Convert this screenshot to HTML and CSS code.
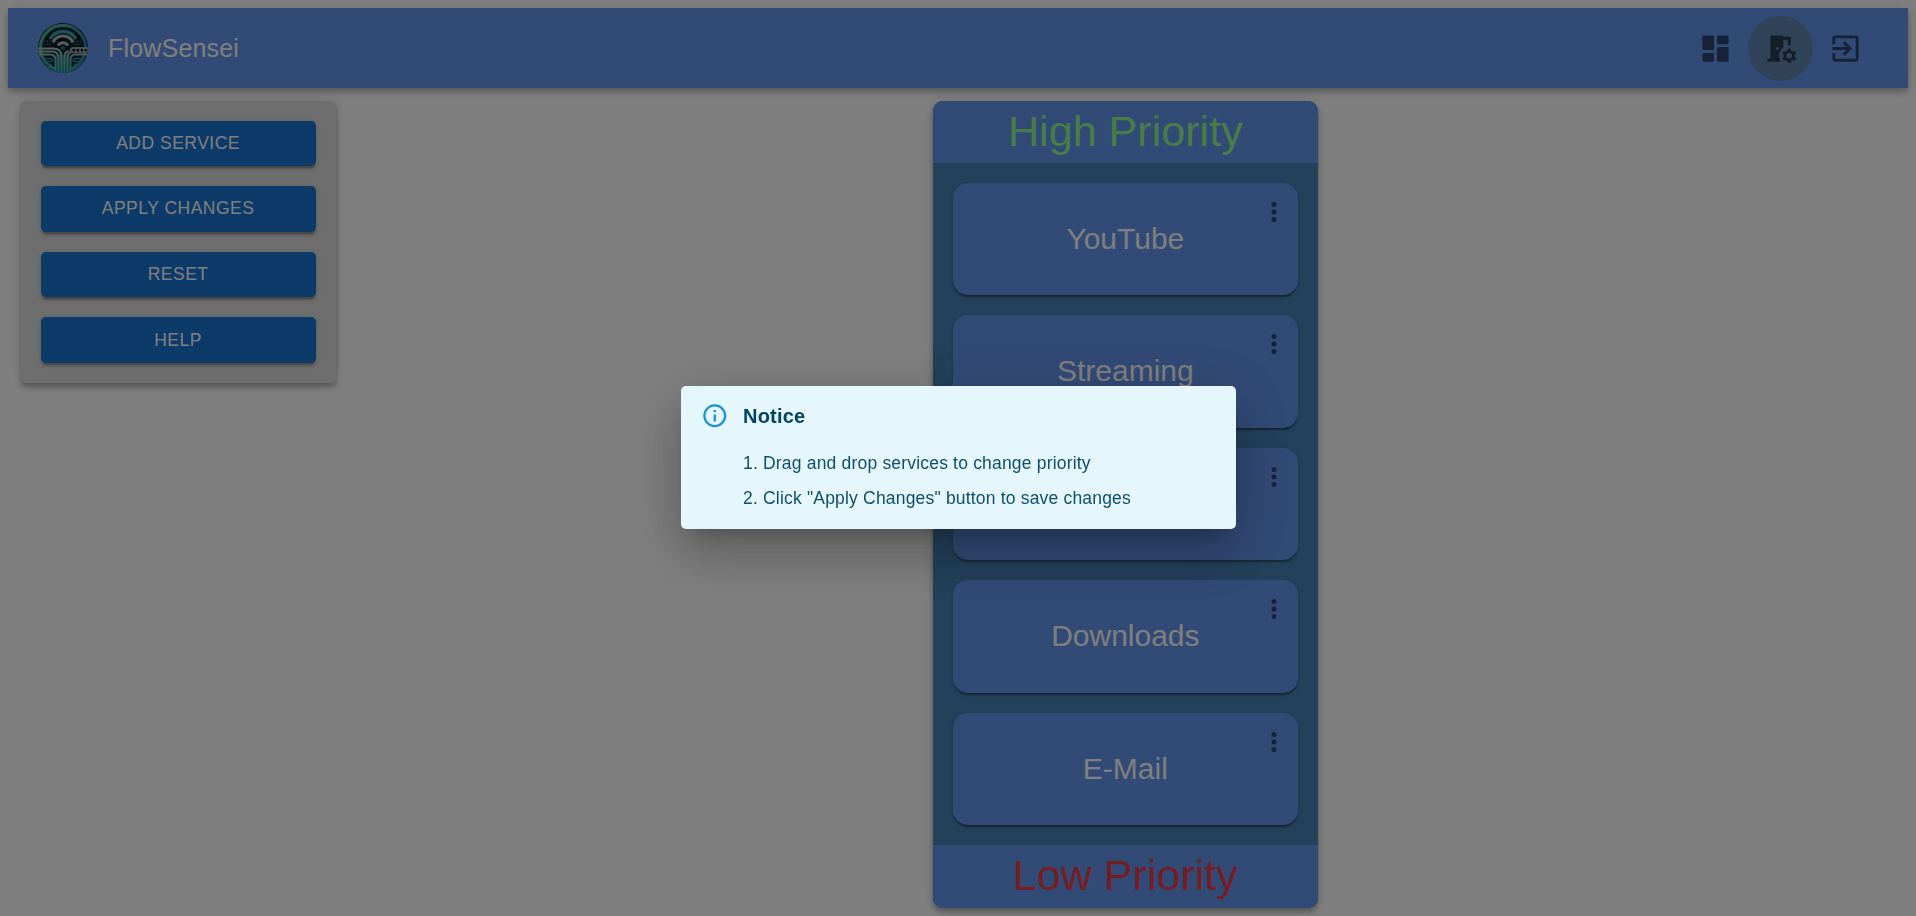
FILE: index.html
```html
<!DOCTYPE html>
<html lang="en">
<head>
<meta charset="utf-8">
<title>FlowSensei</title>
<link rel="stylesheet" href="styles.css">
</head>
<body>
<header class="app-bar">
  <svg class="logo" viewBox="0 0 50 50">
    <defs>
      <clipPath id="disc"><circle cx="25" cy="25" r="25"/></clipPath>
      <linearGradient id="rim" gradientUnits="userSpaceOnUse" x1="2" x2="48" y1="0" y2="0"><stop offset="0" stop-color="#48b880"/><stop offset=".5" stop-color="#58a8a4"/><stop offset="1" stop-color="#2b859c"/></linearGradient>
      <linearGradient id="flow" gradientUnits="userSpaceOnUse" x1="0" x2="0" y1="24" y2="50"><stop offset="0" stop-color="#b4c4c2"/><stop offset=".4" stop-color="#7cbcb4"/><stop offset="1" stop-color="#2cb0ac"/></linearGradient>
    </defs>
    <g clip-path="url(#disc)" fill="none">
      <rect width="50" height="50" fill="#071a2b"/>
      <circle cx="25" cy="25" r="22.600" stroke="url(#rim)" stroke-width="3.200"/>
      <path d="M12 16a15 15 0 0 1 26 0" stroke="#3c9cab" stroke-width="3.400"/>
      <path d="M15 19.500a11 11 0 0 1 20 0M20 22.500a5.800 5.800 0 0 1 10 0" stroke="#b8b8b6" stroke-width="3"/>
      <path d="M6 18.500h7M6 21.500h8M37 18.500h7M36 21.500h8" stroke="#3e7680" stroke-width="1.400" stroke-dasharray="1.400 1.200"/>
      <path d="M17.500 32h14v18h-14z" fill="#1f6c74"/>
      <path d="M0 25.500h15q8.500 0 8.500 8v17M0 28.500h14q6.500 0 6.500 6.500v15M0 31.500h12q5.500 0 5.500 5.500v13M50 31.500H37q-4.500 0-4.500 5.500v13M26.500 50V34q0-5 4-6M29.500 50V35q0-5 4-6" stroke="url(#flow)" stroke-width="2"/>
      <path d="M32 25.500q1-1.500 3-1.500h15v6H31z" fill="#98a1a7"/>
      <path d="M34.500 27.200h14" stroke="#071a2b" stroke-width="2.600" stroke-dasharray="2.500 1.600"/>
      <path d="M4 35.500h8q3 0 3 3M6 38.500h8M8 41.500h6M46 35.500h-8q-3 0-3 3M44 38.500h-8M43 41.500h-7" stroke="#2e90a2" stroke-width="1.500"/>
      <path d="M5 38q4 7 11 10M45 38q-4 7-11 10" stroke="#28808f" stroke-width="2"/>
      <circle cx="25" cy="25" r="2.600" fill="#247b78" stroke="#071a2b"/>
    </g>
  </svg>
  <span class="brand">FlowSensei</span>
  <nav class="nav">
    <button class="icon-button" aria-label="Dashboard"><svg viewBox="0 0 24 24"><path d="M4 13h6c.55 0 1-.45 1-1V4c0-.55-.45-1-1-1H4c-.55 0-1 .45-1 1v8c0 .55.45 1 1 1zm0 8h6c.55 0 1-.45 1-1v-4c0-.55-.45-1-1-1H4c-.55 0-1 .45-1 1v4c0 .55.45 1 1 1zm10 0h6c.55 0 1-.45 1-1v-8c0-.55-.45-1-1-1h-6c-.55 0-1 .45-1 1v8c0 .55.45 1 1 1zM13 4v4c0 .55.45 1 1 1h6c.55 0 1-.45 1-1V4c0-.55-.45-1-1-1h-6c-.55 0-1 .45-1 1z"/></svg></button>
    <button class="icon-button active" aria-label="Preferences"><svg viewBox="0 0 24 24"><path d="M14 11.260V6h3v4h2V4h-5V3H5v16H3v2h9.260c-.79-1.130-1.260-2.510-1.260-4 0-2.380 1.190-4.470 3-5.740zM10 11c.55 0 1 .45 1 1s-.45 1-1 1-1-.45-1-1 .45-1 1-1z"/><path d="M21.690 16.370l1.140-1-1-1.730-1.450.49c-.32-.27-.68-.48-1.080-.63L19 12h-2l-.3 1.490c-.4.15-.76.36-1.080.63l-1.450-.49-1 1.730 1.140 1c-.08.5-.08.76 0 1.260l-1.140 1 1 1.730 1.450-.49c.32.27.68.48 1.080.63L17 22h2l.3-1.490c.4-.15.76-.36 1.080-.63l1.450.49 1-1.730-1.140-1c.08-.51.08-.77 0-1.270zM18 19c-1.100 0-2-.9-2-2s.9-2 2-2 2 .9 2 2-.9 2-2 2z"/></svg></button>
    <button class="icon-button" aria-label="Log out"><svg viewBox="0 0 24 24"><path d="M10.090 15.590L11.500 17l5-5-5-5-1.410 1.410L12.670 11H3v2h9.670l-2.580 2.590zM19 3H5c-1.110 0-2 .9-2 2v4h2V5h14v14H5v-4H3v4c0 1.100.89 2 2 2h14c1.100 0 2-.9 2-2V5c0-1.100-.9-2-2-2z"/></svg></button>
  </nav>
</header>
<main class="content">
  <aside class="actions">
    <button class="action">ADD SERVICE</button>
    <button class="action">APPLY CHANGES</button>
    <button class="action">RESET</button>
    <button class="action">HELP</button>
  </aside>
  <div class="stage">
    <section class="board">
      <h1 class="board-title high">High Priority</h1>
      <div class="cards">
        <div class="card">YouTube<svg class="more" viewBox="0 0 24 24"><circle cx="12" cy="6" r="2"/><circle cx="12" cy="12" r="2"/><circle cx="12" cy="18" r="2"/></svg></div>
        <div class="card">Streaming<svg class="more" viewBox="0 0 24 24"><circle cx="12" cy="6" r="2"/><circle cx="12" cy="12" r="2"/><circle cx="12" cy="18" r="2"/></svg></div>
        <div class="card"><svg class="more" viewBox="0 0 24 24"><circle cx="12" cy="6" r="2"/><circle cx="12" cy="12" r="2"/><circle cx="12" cy="18" r="2"/></svg></div>
        <div class="card">Downloads<svg class="more" viewBox="0 0 24 24"><circle cx="12" cy="6" r="2"/><circle cx="12" cy="12" r="2"/><circle cx="12" cy="18" r="2"/></svg></div>
        <div class="card">E-Mail<svg class="more" viewBox="0 0 24 24"><circle cx="12" cy="6" r="2"/><circle cx="12" cy="12" r="2"/><circle cx="12" cy="18" r="2"/></svg></div>
      </div>
      <h1 class="board-title low">Low Priority</h1>
    </section>
  </div>
</main>
<div class="backdrop">
  <div class="notice" role="dialog">
    <svg class="notice-icon" viewBox="0 0 24 24"><path d="M11 9h2V7h-2M12 20c-4.410 0-8-3.590-8-8s3.590-8 8-8 8 3.590 8 8-3.590 8-8 8m0-18A10 10 0 0 0 2 12a10 10 0 0 0 10 10 10 10 0 0 0 10-10A10 10 0 0 0 12 2m-1 15h2v-6h-2v6z"/></svg>
    <div class="notice-body">
      <div class="notice-title">Notice</div>
      <p class="notice-line">1. Drag and drop services to change priority</p>
      <p class="notice-line">2. Click "Apply Changes" button to save changes</p>
    </div>
  </div>
</div>
</body>
</html>
```
FILE: styles.css
```css
* { box-sizing: border-box; }
html { height: 100%; overflow: hidden; background: #fff; }
body { margin: 0; height: 100%; overflow: hidden; font-family: "Liberation Sans", Arial, sans-serif; }
button { font: inherit; border: 0; }

.app-bar {
  display: flex;
  align-items: center;
  height: 80px;
  margin: 8px 8px 0;
  padding: 0 30px;
  background: #6495ed;
  box-shadow: 0 2.500px 5px -1.250px rgba(0,0,0,.2), 0 5px 6.250px rgba(0,0,0,.14), 0 1.250px 12.500px rgba(0,0,0,.12);
}
.logo { width: 50px; height: 50px; }
.brand { margin-left: 20px; color: #fff; font-size: 25px; line-height: 40px; letter-spacing: .0075em; }
.nav { display: flex; margin-left: auto; }
.icon-button { width: 65px; height: 65px; padding: 15px; border-radius: 50%; background: none; }
.icon-button svg { display: block; width: 35px; height: 35px; fill: rgba(0,0,0,.54); }
.icon-button.active { background: #6287b3; }

.content { display: flex; align-items: flex-start; padding: 12.500px .5px 0 20.600px; }
.actions {
  display: flex;
  flex-direction: column;
  gap: 20px;
  width: 315px;
  padding: 20px;
  background: #dcdcdc;
  border-radius: 5px;
  box-shadow: 0 2.500px 5px -1.250px rgba(0,0,0,.2), 0 5px 6.250px rgba(0,0,0,.14), 0 1.250px 12.500px rgba(0,0,0,.12);
}
.action {
  height: 45.625px;
  padding: 0;
  background: #1976d2;
  color: #fff;
  border-radius: 5px;
  font-size: 17.500px;
  letter-spacing: .02857em;
  box-shadow: 0 3.750px 1.250px -2.500px rgba(0,0,0,.2), 0 2.500px 2.500px rgba(0,0,0,.14), 0 1.250px 6.250px rgba(0,0,0,.12);
}

.stage { flex: 1; display: flex; justify-content: center; }
.board {
  width: 385px;
  margin-right: .4px;
  overflow: hidden;
  background: #4682b4;
  border-radius: 10px;
  box-shadow: 0 2.500px 5px -1.250px rgba(0,0,0,.2), 0 5px 6.250px rgba(0,0,0,.14), 0 1.250px 12.500px rgba(0,0,0,.12);
}
.board-title { margin: 0; height: 62.500px; background: #6495ed; font-size: 43.100px; font-weight: 400; line-height: 61px; text-align: center; }
.board-title.high { height: 62px; color: #90f890; }
.board-title.low { color: #e63c48; }
.cards { display: flex; flex-direction: column; gap: 20px; padding: 20px; }
.card {
  position: relative;
  display: flex;
  align-items: center;
  justify-content: center;
  height: 112.500px;
  background: #6495ed;
  color: #fff;
  font-size: 30px;
  border-radius: 15px;
  box-shadow: 0 2.500px 1.250px -1.250px rgba(0,0,0,.2), 0 1.250px 1.250px rgba(0,0,0,.14), 0 1.250px 3.750px rgba(0,0,0,.12);
}
.more { position: absolute; top: 14px; right: 9px; width: 30px; height: 30px; fill: rgba(0,0,0,.54); }

.backdrop { position: fixed; inset: 0; display: flex; align-items: center; justify-content: center; padding-bottom: 1px; background: rgba(0,0,0,.5); }
.notice {
  display: flex;
  width: 555px;
  height: 143px;
  padding: 7.500px 20px;
  background: #e5f6fd;
  color: #014361;
  border-radius: 5px;
  box-shadow: 0 13.750px 18.750px -8.750px rgba(0,0,0,.2), 0 30px 47.500px 3.750px rgba(0,0,0,.14), 0 11.250px 57.500px 10px rgba(0,0,0,.12);
}
.notice-icon { width: 27.500px; height: 27.500px; margin: 8.750px 15px 0 0; fill: #0288d1; opacity: .9; }
.notice-body { padding-top: 7.500px; }
.notice-title { font-size: 20px; font-weight: 700; line-height: 30px; letter-spacing: .0094em; margin-bottom: 10px; }
.notice-line { margin: 0; padding-top: 10px; color: #0f4f6c; font-size: 17.500px; line-height: 25px; letter-spacing: .01071em; }
```
